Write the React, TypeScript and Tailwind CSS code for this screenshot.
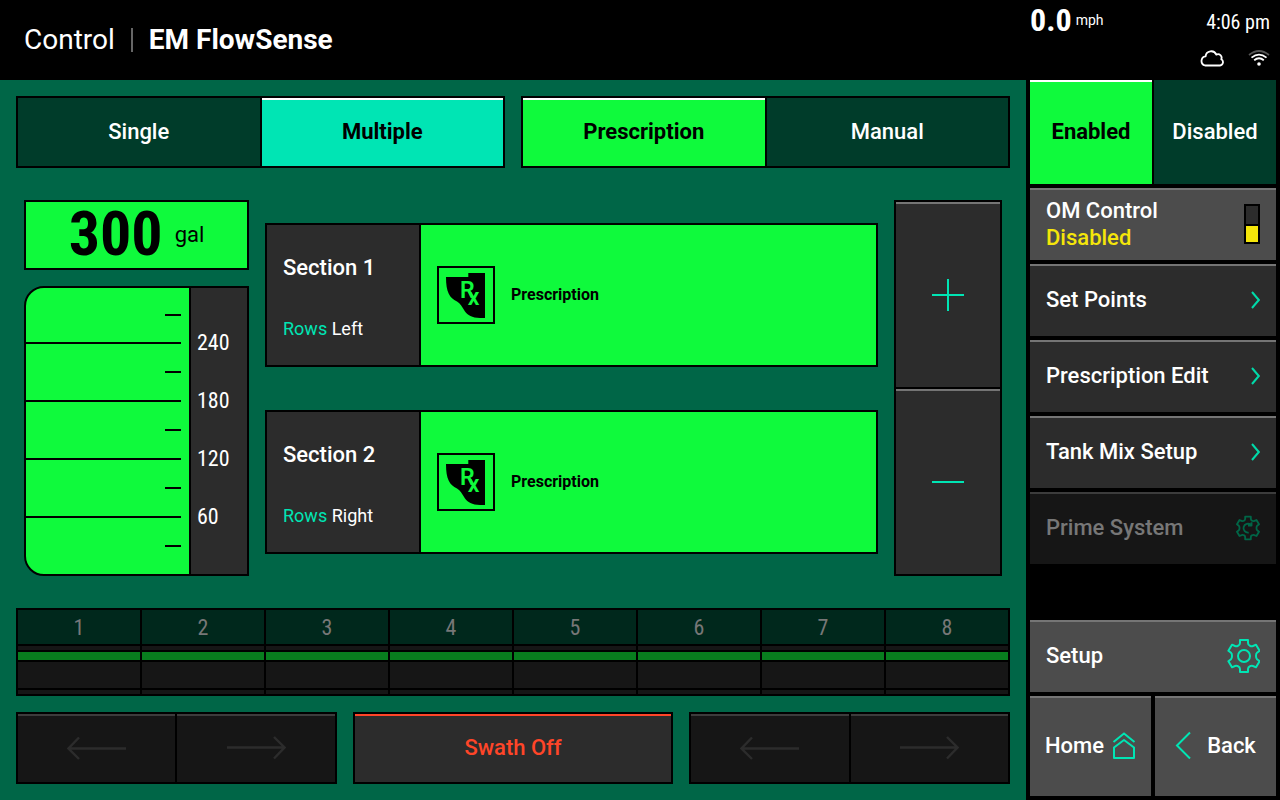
import React, { useState } from 'react';

const SECTIONS = [
  { name: 'Section 1', rows: 'Left' },
  { name: 'Section 2', rows: 'Right' },
];

const LEVELS = [240, 180, 120, 60];
const SWATHS = [1, 2, 3, 4, 5, 6, 7, 8];
const MENU = ['Set Points', 'Prescription Edit', 'Tank Mix Setup'];

const GEAR =
  'M-4 -16H4V-13Q4 -11 6 -10.2Q7.5 -9.3 9 -10L12 -11.3L15.6 -5.2L13 -3.2Q12 -2.4 12 0Q12 2.4 13 3.2L15.6 5.2L12 11.3L9 10Q7.5 9.3 6 10.2Q4 11 4 13V16H-4V13Q-4 11 -6 10.2Q-7.5 9.3 -9 10L-12 11.3L-15.6 5.2L-13 3.2Q-12 2.4 -12 0Q-12 -2.4 -13 -3.2L-15.6 -5.2L-12 -11.3L-9 -10Q-7.5 -9.3 -6 -10.2Q-4 -11 -4 -13Z';

const GearIcon = () => (
  <svg width="34" height="36" viewBox="-18 -18 34 36" fill="none" stroke="#00e5b4" strokeWidth="2" strokeLinejoin="round">
    <path d={GEAR} />
    <circle r="6" />
  </svg>
);

const PrimeIcon = () => (
  <svg width="24" height="26" viewBox="-17 -18 34 36" fill="none" stroke="#006647" strokeWidth="2.6" strokeLinejoin="round">
    <path d={GEAR} />
    <path d="M1 6.5A6.3 6.3 0 1 1 4 -4.5M5 -8V-3.5H0" />
  </svg>
);

const Chevron = () => (
  <svg width="10" height="18" viewBox="0 0 10 18" fill="none" stroke="#00d9a9" strokeWidth="2">
    <path d="M2 1L8.8 9L2 17" />
  </svg>
);

const HomeIcon = () => (
  <svg width="24" height="28" viewBox="0 0 24 28" fill="none" stroke="#00e5b4" strokeWidth="2">
    <path d="M1.5 11L12 2.5L22.5 11" />
    <path d="M2 27V16.5L12 9L22 16.5V27Z" strokeLinejoin="round" />
  </svg>
);

const BackIcon = () => (
  <svg width="16" height="28" viewBox="0 0 16 28" fill="none" stroke="#00e5b4" strokeWidth="2">
    <path d="M15 1.5L2 14.5L15 27.5" />
  </svg>
);

const CloudIcon = () => (
  <svg width="24" height="17" viewBox="0 0 24 17" fill="none" stroke="#fff" strokeWidth="1.8" strokeLinejoin="round">
    <path d="M5 15.5H20A3.4 3.4 0 0 0 21.3 9.2A3.6 3.6 0 0 0 16.3 4.6A5.6 5.6 0 0 0 5.6 6.3A4.7 4.7 0 0 0 5 15.5Z" />
  </svg>
);

const WifiIcon = () => (
  <svg width="22" height="17" viewBox="0 0 22 17" fill="none" stroke="#fff" strokeWidth="1.8">
    <path d="M1 5Q11 -3 21 5" stroke="#555" />
    <path d="M3.5 7.6Q11 1.6 18.5 7.6" />
    <path d="M6.2 10.3Q11 6.2 15.8 10.3" />
    <circle cx="11" cy="14" r="1.8" fill="#fff" stroke="none" />
  </svg>
);

const ArrowIcon = ({ dir }: { dir: 'left' | 'right' }) => (
  <svg width="60" height="24" viewBox="0 0 60 24" fill="none" stroke="#2c2c2c" strokeWidth="2.4">
    <path d={dir === 'left' ? 'M59 12.5H1.5M12 1.5L1.5 12.5L12 23' : 'M1 11.5H58.5M48 1L58.5 11.5L48 22.5'} />
  </svg>
);

const RxIcon = () => (
  <svg width="54" height="54" viewBox="0 0 54 54">
    <path d="M7 9H29.3V5H46V50H41C33 50 28.5 47 26 43.5C23 39 21.5 35.5 18 33.5C10.5 30 7 24 7 9Z" />
    <text x="21" y="30" fontSize="23" fontWeight="600" fontFamily="Roboto, sans-serif" fill="#0ffa3c">
      R<tspan dx="-7" dy="7">x</tspan>
    </text>
  </svg>
);

interface ToggleProps {
  options: string[];
  accents: string[];
  initial: number;
}

const Toggle: React.FC<ToggleProps> = ({ options, accents, initial }) => {
  const [active, setActive] = useState(initial);
  return (
    <div className="grid h-[72px] grid-cols-2 gap-0.5 bg-black p-0.5">
      {options.map((label, i) => (
        <button
          key={label}
          aria-pressed={active === i}
          onClick={() => setActive(i)}
          className={`border-t-2 pb-1 text-[22px] ${
            active === i ? `border-white font-bold text-black ${accents[i]}` : 'border-[#003c2a] bg-[#003c2a] font-medium text-white'
          }`}
        >
          {label}
        </button>
      ))}
    </div>
  );
};

const Tank = () => (
  <div className="flex w-[225px] flex-col gap-4">
    <div className="flex h-[70px] items-center justify-center gap-3 border-2 border-black bg-[#0ffa3c] pb-0.5 text-black">
      <span className="font-['Roboto_Condensed',Roboto,sans-serif] text-[62px] leading-none font-bold">300</span>
      <span className="text-[22px]">gal</span>
    </div>
    <div className="flex flex-1 overflow-hidden rounded-l-[20px] border-2 border-black bg-[#0ffa3c]">
      <div className="flex flex-1 flex-col border-r-2 border-black pr-2">
        <div className="flex h-14 items-center justify-end border-b-2 border-black">
          <span className="h-0.5 w-4 bg-black" />
        </div>
        {[0, 1, 2].map((i) => (
          <div key={i} className="flex h-[58px] items-center justify-end border-b-2 border-black">
            <span className="h-0.5 w-4 bg-black" />
          </div>
        ))}
        <div className="flex flex-1 items-center justify-end">
          <span className="h-0.5 w-4 bg-black" />
        </div>
      </div>
      <div className="flex w-14 flex-col justify-center bg-[#2c2c2c] pb-1 pl-1.5 font-['Roboto_Condensed',Roboto,sans-serif] text-[22px] text-white">
        {LEVELS.map((level) => (
          <span key={level} className="flex h-[58px] items-center">{level}</span>
        ))}
      </div>
    </div>
  </div>
);

const ArrowPair = () => (
  <div className="grid grid-cols-2 gap-0.5 bg-black p-0.5">
    <button disabled aria-label="Shift left" className="flex items-center justify-center border-t-2 border-[#3c3c3c] bg-[#161616] pb-0.5">
      <ArrowIcon dir="left" />
    </button>
    <button disabled aria-label="Shift right" className="flex items-center justify-center border-t-2 border-[#3c3c3c] bg-[#161616] pb-0.5">
      <ArrowIcon dir="right" />
    </button>
  </div>
);

export default function App() {
  const [enabled, setEnabled] = useState(true);

  return (
    <div className="flex min-h-screen bg-black font-[Roboto,sans-serif] text-white">
      <div className="flex min-w-0 flex-1 flex-col">
        <header className="flex h-20 items-center pl-6 text-[28px]">
          <span>Control</span>
          <span className="mx-4 h-6 w-0.5 bg-[#666]" />
          <h1 className="font-bold">EM FlowSense</h1>
        </header>

        <main className="flex flex-1 flex-col bg-[#006647] p-4">
          <div className="grid grid-cols-2 gap-4">
            <Toggle options={['Single', 'Multiple']} accents={['bg-[#00e5b4]', 'bg-[#00e5b4]']} initial={1} />
            <Toggle options={['Prescription', 'Manual']} accents={['bg-[#0ffa3c]', 'bg-[#0ffa3c]']} initial={0} />
          </div>

          <div className="flex flex-1 gap-4 px-2 py-8">
            <Tank />

            <div className="flex flex-1 flex-col justify-center gap-[43px] pt-px">
              {SECTIONS.map((section) => (
                <div key={section.name} className="flex h-36 border-2 border-black bg-[#0ffa3c]">
                  <div className="flex w-[154px] flex-col justify-between border-r-2 border-black bg-[#2c2c2c] pt-[25px] pb-[22px] pl-4">
                    <h2 className="text-[22px] leading-9 font-medium">{section.name}</h2>
                    <p className="text-lg leading-7">
                      <span className="text-[#00e5b4]">Rows</span> {section.rows}
                    </p>
                  </div>
                  <div className="flex items-center gap-4 pl-4 text-black">
                    <span className="border-2 border-black">
                      <RxIcon />
                    </span>
                    <span className="text-base font-bold">Prescription</span>
                  </div>
                </div>
              ))}
            </div>

            <div className="grid w-[108px] grid-rows-2 gap-0.5 bg-black p-0.5">
              <button aria-label="Increase" className="flex items-center justify-center border-t-2 border-[#757575] bg-[#2c2c2c] pb-0.5">
                <svg width="32" height="32" viewBox="0 0 32 32" stroke="#00e5b4" strokeWidth="2">
                  <path d="M0 16H32M16 0V32" />
                </svg>
              </button>
              <button aria-label="Decrease" className="flex items-center justify-center border-t-2 border-[#757575] bg-[#2c2c2c] pb-0.5">
                <svg width="32" height="32" viewBox="0 0 32 32" stroke="#00e5b4" strokeWidth="2">
                  <path d="M0 16H32" />
                </svg>
              </button>
            </div>
          </div>

          {/* Swath status */}
          <div className="grid grid-cols-8 gap-0.5 bg-black p-0.5">
            {SWATHS.map((n) => (
              <div key={n} className="flex flex-col gap-0.5">
                <span className="flex h-[34px] items-center justify-center bg-[#00281c] font-['Roboto_Condensed',Roboto,sans-serif] text-[22px] text-[#777]">
                  {n}
                </span>
                <span className="h-1 bg-[#161616]" />
                <span className="h-2 bg-[#087d1e]" />
                <span className="h-[26px] bg-[#161616]" />
                <span className="h-1 bg-[#161616]" />
              </div>
            ))}
          </div>

          <div className="mt-4 grid h-[72px] grid-cols-3 gap-4">
            <ArrowPair />
            <div className="flex border-2 border-black">
              <button className="flex-1 border-t-2 border-[#ff4528] bg-[#2c2c2c] pb-1 text-[22px] font-medium text-[#ff4528]">
                Swath Off
              </button>
            </div>
            <ArrowPair />
          </div>
        </main>
      </div>

      <aside className="flex w-[254px] flex-col p-1 pt-0 text-[22px] font-medium">
        <div className="flex h-20 flex-col justify-between pt-1 pr-1.5 pb-[13px] font-['Roboto_Condensed',Roboto,sans-serif] font-normal">
          <div className="flex items-center justify-between">
            <div className="flex items-center gap-1">
              <span className="text-[32px] leading-8 font-bold">0.0</span>
              <span className="font-[Roboto,sans-serif] text-sm">mph</span>
            </div>
            <span className="pt-1 text-xl leading-7">4:06 pm</span>
          </div>
          <div className="flex justify-end gap-6">
            <CloudIcon />
            <WifiIcon />
          </div>
        </div>

        <div className="flex flex-1 flex-col gap-1">
          <div className="grid h-[104px] grid-cols-2 gap-0.5">
            <button
              aria-pressed={enabled}
              onClick={() => setEnabled(true)}
              className={`border-t-2 pb-1 ${enabled ? 'border-white bg-[#0ffa3c] font-bold text-black' : 'border-[#003c2a] bg-[#003c2a]'}`}
            >
              Enabled
            </button>
            <button
              aria-pressed={!enabled}
              onClick={() => setEnabled(false)}
              className={`border-t-2 pb-1 ${!enabled ? 'border-white bg-[#0ffa3c] font-bold text-black' : 'border-[#003c2a] bg-[#003c2a]'}`}
            >
              Disabled
            </button>
          </div>

          <button className="flex h-[72px] items-center justify-between border-t-2 border-[#757575] bg-[#4c4c4c] px-4 pb-0.5 text-left leading-[27px]">
            <span>
              OM Control
              <span className="block text-[#f5e60a]">Disabled</span>
            </span>
            <span className="flex h-10 w-4 flex-col gap-0.5 bg-black p-0.5">
              <span className="flex-1 bg-[#2c2c2c]" />
              <span className="h-4 bg-[#f5e60a]" />
            </span>
          </button>

          {MENU.map((item) => (
            <button key={item} className="flex h-[72px] items-center justify-between border-t-2 border-[#757575] bg-[#2c2c2c] px-4 pb-0.5">
              <span className="pb-0.5">{item}</span>
              <Chevron />
            </button>
          ))}

          <button disabled className="flex h-[72px] items-center justify-between border-t-2 border-[#3c3c3c] bg-[#161616] px-4 pb-0.5 text-[#777]">
            <span className="pb-0.5">Prime System</span>
            <PrimeIcon />
          </button>

          <button className="mt-auto flex h-[72px] items-center justify-between border-t-2 border-[#757575] bg-[#4c4c4c] px-4 pb-0.5">
            <span className="pb-0.5">Setup</span>
            <GearIcon />
          </button>

          <nav className="grid h-[100px] grid-cols-2 gap-1">
            <button className="flex items-center justify-center gap-2 border-t-2 border-[#757575] bg-[#4c4c4c] pb-1">
              Home
              <HomeIcon />
            </button>
            <button className="flex items-center justify-center gap-4 border-t-2 border-[#757575] bg-[#4c4c4c] pb-1">
              <BackIcon />
              Back
            </button>
          </nav>
        </div>
      </aside>
    </div>
  );
}
